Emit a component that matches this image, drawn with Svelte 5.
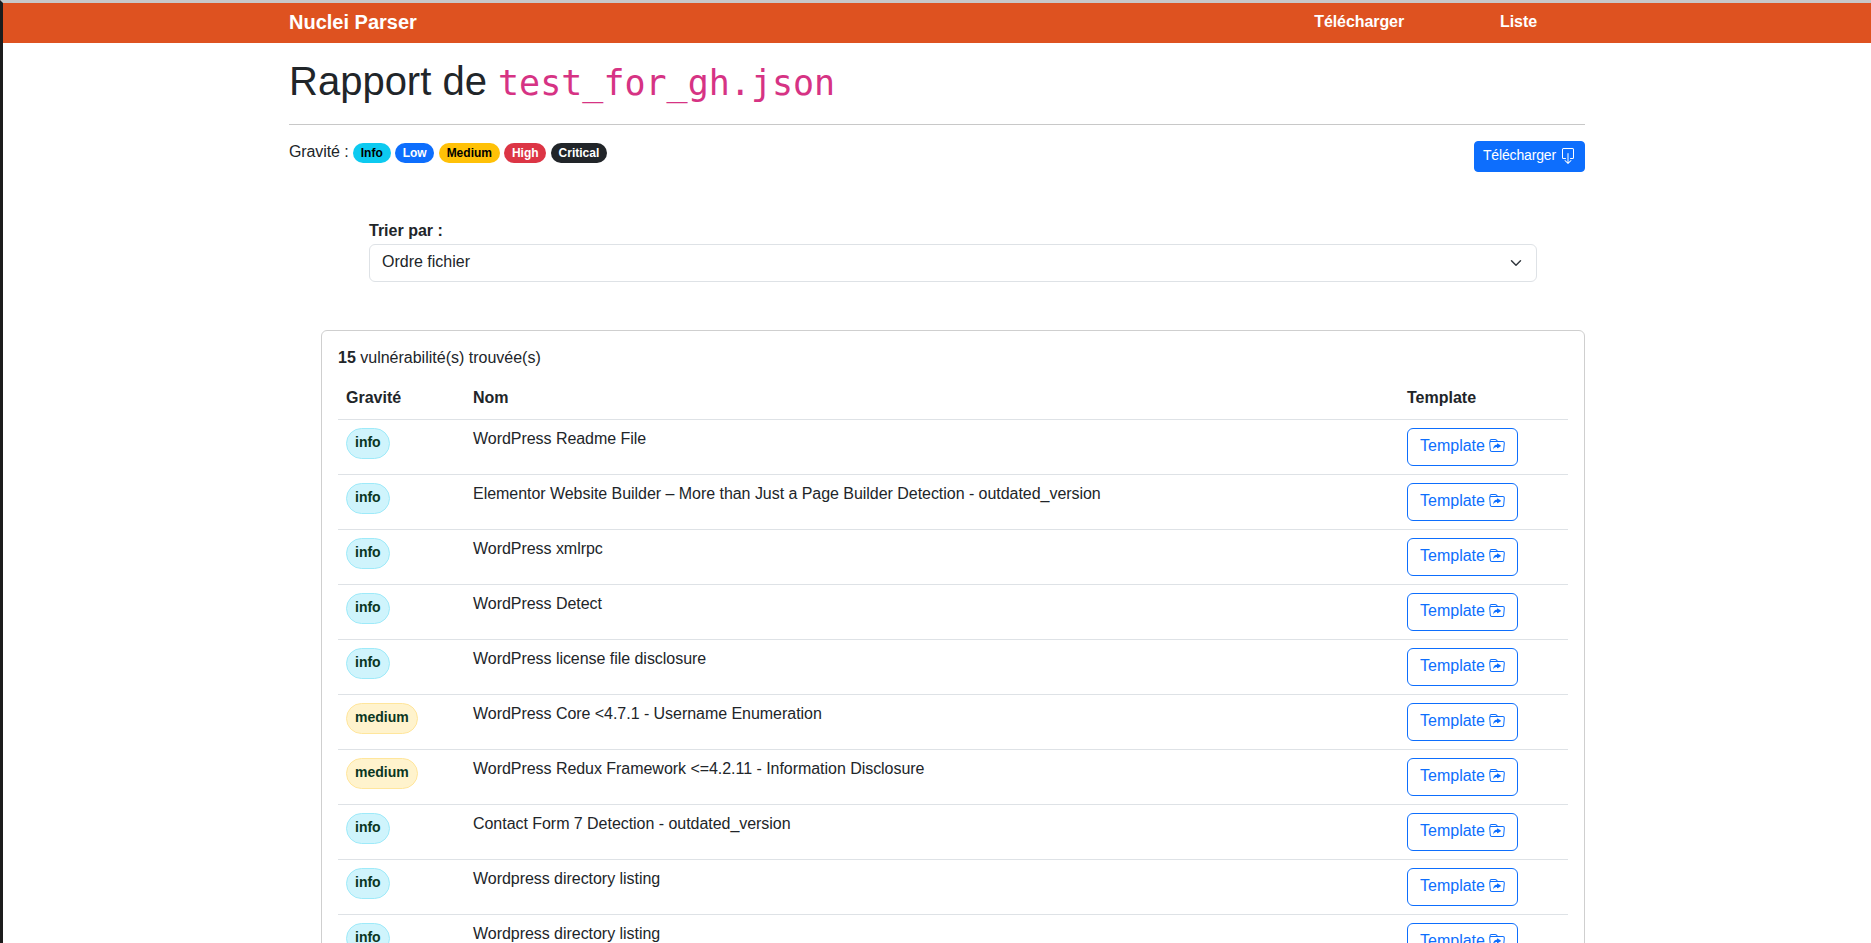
<script>
  const badges = [
    { label: 'Info', cls: 'b-info' },
    { label: 'Low', cls: 'b-low' },
    { label: 'Medium', cls: 'b-medium' },
    { label: 'High', cls: 'b-high' },
    { label: 'Critical', cls: 'b-critical' }
  ];

  const vulns = [
    { severity: 'info', name: 'WordPress Readme File' },
    { severity: 'info', name: 'Elementor Website Builder – More than Just a Page Builder Detection - outdated_version' },
    { severity: 'info', name: 'WordPress xmlrpc' },
    { severity: 'info', name: 'WordPress Detect' },
    { severity: 'info', name: 'WordPress license file disclosure' },
    { severity: 'medium', name: 'WordPress Core <4.7.1 - Username Enumeration' },
    { severity: 'medium', name: 'WordPress Redux Framework <=4.2.11 - Information Disclosure' },
    { severity: 'info', name: 'Contact Form 7 Detection - outdated_version' },
    { severity: 'info', name: 'Wordpress directory listing' },
    { severity: 'info', name: 'Wordpress directory listing' }
  ];
</script>

<div class="shell">
  <header>
    <div class="container bar">
      <span class="brand">Nuclei Parser</span>
      <nav>
        <span class="link">Télécharger</span>
        <span class="link">Liste</span>
      </nav>
    </div>
  </header>

  <main class="container">
    <h1>Rapport de <code>test_for_gh.json</code></h1>
    <hr />

    <div class="toolbar">
      <div class="legend">
        Gravité :
        {#each badges as b}
          <span class="badge {b.cls}">{b.label}</span>{' '}
        {/each}
      </div>
      <button class="download">
        Télécharger
        <svg viewBox="0 0 16 16" width="16" height="16" fill="currentColor">
          <path fill-rule="evenodd" d="M3.5 10a.5.5 0 0 1-.5-.5v-8a.5.5 0 0 1 .5-.5h9a.5.5 0 0 1 .5.5v8a.5.5 0 0 1-.5.5h-2a.5.5 0 0 0 0 1h2A1.5 1.5 0 0 0 14 9.5v-8A1.5 1.5 0 0 0 12.5 0h-9A1.5 1.5 0 0 0 2 1.5v8A1.5 1.5 0 0 0 3.5 11h2a.5.5 0 0 0 0-1z" />
          <path fill-rule="evenodd" d="M7.646 15.854a.5.5 0 0 0 .708 0l3-3a.5.5 0 0 0-.708-.708L8.5 14.293V5.5a.5.5 0 0 0-1 0v8.793l-2.146-2.147a.5.5 0 0 0-.708.708z" />
        </svg>
      </button>
    </div>

    <div class="sort">
      <label for="sort-select">Trier par :</label>
      <select id="sort-select">
        <option>Ordre fichier</option>
      </select>
    </div>

    <section class="card">
      <p class="count"><strong>15</strong> vulnérabilité(s) trouvée(s)</p>
      <table>
        <thead>
          <tr>
            <th class="col-sev">Gravité</th>
            <th>Nom</th>
            <th class="col-tpl">Template</th>
          </tr>
        </thead>
        <tbody>
          {#each vulns as v}
            <tr>
              <td><span class="pill {v.severity}">{v.severity}</span></td>
              <td class="name">{v.name}</td>
              <td>
                <button class="template">
                  Template
                  <svg viewBox="0 0 16 16" width="16" height="16" fill="currentColor">
                    <path d="m11.798 8.271-3.182 1.97c-.27.166-.616-.036-.616-.372V9.1s-2.571-.3-4 2.4c.571-4.8 3.143-4.8 4-4.8v-.769c0-.336.346-.538.616-.371l3.182 1.969c.27.166.27.576 0 .742" />
                    <path d="m.5 3 .04.87a2 2 0 0 0-.342 1.311l.637 7A2 2 0 0 0 2.826 14h10.348a2 2 0 0 0 1.991-1.819l.637-7A2 2 0 0 0 13.81 3H9.828a2 2 0 0 1-1.414-.586l-.828-.828A2 2 0 0 0 6.172 1H2.5a2 2 0 0 0-2 2m.694 2.09A1 1 0 0 1 2.19 4h11.62a1 1 0 0 1 .996 1.09l-.636 7a1 1 0 0 1-.996.91H2.826a1 1 0 0 1-.995-.91zM6.172 2a1 1 0 0 1 .707.293L7.586 3H2.19q-.362.002-.683.12L1.5 2.98a1 1 0 0 1 1-.98z" />
                  </svg>
                </button>
              </td>
            </tr>
          {/each}
        </tbody>
      </table>
    </section>
  </main>
</div>

<style>
  :global(body) {
    margin: 0;
    background: #fff;
    color: #212529;
    font-family: "Liberation Sans", Arial, sans-serif;
    font-size: 16px;
    line-height: 1.5;
  }

  .shell {
    height: 100vh;
    box-sizing: border-box;
    overflow: hidden;
    border-left: 3px solid #1c1c1c;
    border-top: 3px solid #c8c8c8;
  }

  .container {
    box-sizing: border-box;
    width: 1320px;
    margin: 0 auto;
    padding: 0 12px;
  }

  header {
    background: #de5220;
    color: #fff;
    height: 40px;
  }

  .bar {
    display: flex;
    align-items: center;
    justify-content: space-between;
    height: 100%;
    padding-bottom: 3px;
  }

  .brand {
    font-size: 20px;
    font-weight: 700;
  }

  nav {
    display: flex;
  }

  .link {
    padding: 0 48px;
    font-weight: 700;
    letter-spacing: -0.08px;
  }

  h1 {
    margin: 14px 0 0;
    font-size: 40px;
    font-weight: 400;
    line-height: 48px;
  }

  code {
    font-family: "DejaVu Sans Mono", monospace;
    font-size: 35px;
    color: #d63384;
  }

  hr {
    margin: 17px 0 16px;
    border: 0;
    border-top: 1px solid #c8c8c8;
  }

  .toolbar {
    display: flex;
    justify-content: space-between;
    align-items: flex-start;
  }

  .legend {
    margin-top: -1px;
    letter-spacing: -0.1px;
  }

  .badge {
    display: inline-block;
    padding: 4.2px 7.8px;
    font-size: 12px;
    font-weight: 700;
    line-height: 1;
    letter-spacing: 0;
    border-radius: 50rem;
    color: #fff;
    vertical-align: baseline;
  }

  .b-info { background: #0dcaf0; color: #000; }
  .b-low { background: #0d6efd; }
  .b-medium { background: #ffc107; color: #000; }
  .b-high { background: #dc3545; }
  .b-critical { background: #212529; }

  .download {
    display: inline-flex;
    align-items: center;
    gap: 4px;
    height: 31px;
    padding: 3px 8px 5px;
    background: #0d6efd;
    color: #fff;
    border: 1px solid #0d6efd;
    border-radius: 4px;
    font: inherit;
    font-size: 14px;
    letter-spacing: -0.15px;
  }

  .sort {
    margin: 47px 48px 0 80px;
  }

  label {
    display: block;
    margin-bottom: 1px;
    font-weight: 700;
  }

  select {
    display: block;
    box-sizing: border-box;
    width: 100%;
    height: 38px;
    padding: 5px 36px 7px 12px;
    border: 1px solid #dee2e6;
    border-radius: 6px;
    background: #fff url("data:image/svg+xml,%3csvg xmlns='http://www.w3.org/2000/svg' viewBox='0 0 16 16'%3e%3cpath fill='none' stroke='%23343a40' stroke-linecap='round' stroke-linejoin='round' stroke-width='2' d='m2 5 6 6 6-6'/%3e%3c/svg%3e") no-repeat right 12px center / 16px 12px;
    color: #212529;
    font: inherit;
    appearance: none;
  }

  .card {
    margin: 48px 0 0 32px;
    padding: 15px 16px 16px;
    border: 1px solid #cfcfcf;
    border-radius: 6px;
  }

  .count {
    margin: 0 0 8px;
    line-height: 24px;
  }

  table {
    width: 100%;
    border-collapse: collapse;
    table-layout: fixed;
  }

  th,
  td {
    padding: 8px;
    text-align: left;
    vertical-align: top;
    border-bottom: 1px solid #dee2e6;
  }

  th {
    padding-bottom: 9px;
    font-weight: 700;
  }

  .col-sev {
    width: 111px;
  }

  .col-tpl {
    width: 153px;
  }

  .name {
    padding-top: 7px;
    letter-spacing: -0.04px;
  }

  .pill {
    display: inline-block;
    padding: 3px 8px 5px;
    font-size: 14px;
    font-weight: 700;
    line-height: 21px;
    color: #0a3622;
    border: 1px solid;
    border-radius: 50rem;
  }

  .pill.info {
    background: #cff4fc;
    border-color: #9eeaf9;
  }

  .pill.medium {
    background: #fff3cd;
    border-color: #ffe69c;
  }

  .template {
    display: inline-flex;
    align-items: center;
    gap: 4px;
    height: 38px;
    padding: 5px 12px 7px;
    background: #fff;
    color: #0d6efd;
    border: 1px solid #0d6efd;
    border-radius: 6px;
    font: inherit;
  }
</style>
